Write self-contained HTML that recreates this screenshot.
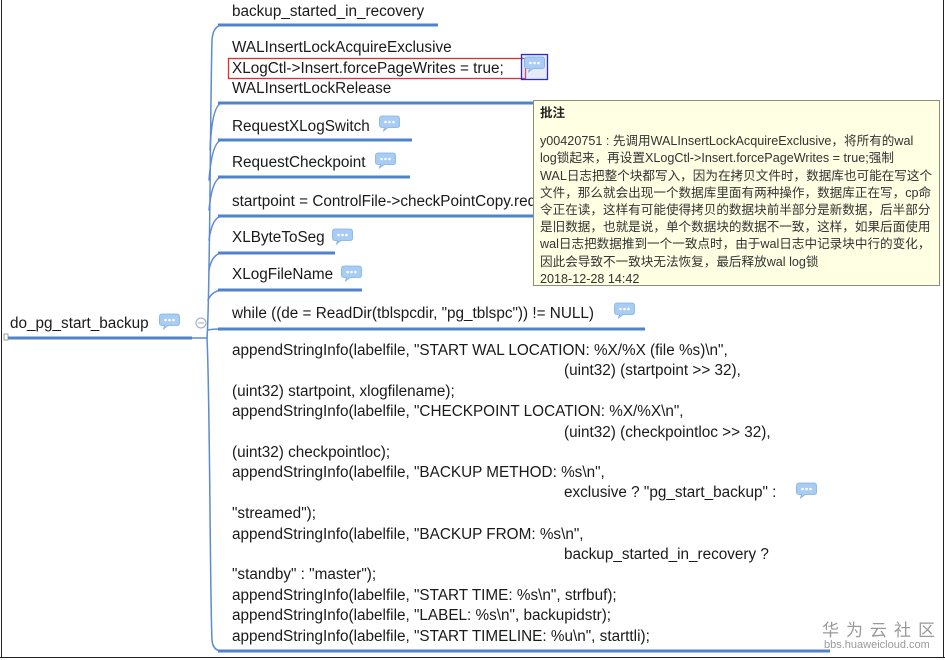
<!DOCTYPE html>
<html><head><meta charset="utf-8"><style>
*{margin:0;padding:0;box-sizing:border-box}
body{width:945px;height:660px;background:#fff;position:relative;overflow:hidden;font-family:"Liberation Sans","Noto Sans CJK SC",sans-serif;color:#1a1a1a}
.t{position:absolute;font-size:15.3px;white-space:pre;line-height:18px}
.ic{position:absolute;width:21px;height:17px}
.tip{position:absolute;left:533px;top:100px;width:407px;height:186px;background:#ffffe3;border:1px solid #8c8c7a;font-size:12.6px;color:#333;padding:4px 0 0 6px;line-height:17.2px;white-space:nowrap;overflow:hidden}
</style></head><body>
<div style="position:absolute;left:1px;top:0;width:1px;height:658px;background:#222"></div>
<div style="position:absolute;left:943px;top:0;width:1px;height:658px;background:#222"></div>
<div style="position:absolute;left:0;top:657px;width:945px;height:1px;background:#222"></div>

<svg width="945" height="660" style="position:absolute;left:0;top:0">
<g fill="none" stroke="#5b8bd0" stroke-linecap="round">
<path d="M192 338 H207" stroke-width="1.5"/>
<path d="M207 338 C210 300 210 120 212 40 Q213 26 222 25" stroke-width="1.5"/>
<path d="M207 338 C210 400 210 600 212 640 Q213 651 222 651" stroke-width="1.5"/>
<path d="M210 150 Q212 104 222 103" stroke-width="1.5"/>
<path d="M209 180 Q212 141 222 140" stroke-width="1.5"/>
<path d="M209 210 Q212 178 222 177" stroke-width="1.5"/>
<path d="M209 240 Q212 217 222 216" stroke-width="1.5"/>
<path d="M209 270 Q212 254 222 253" stroke-width="1.5"/>
<path d="M208 300 Q212 291 222 290" stroke-width="1.5"/>
<path d="M208 330 Q212 329 222 329" stroke-width="1.5"/>
</g>
<g stroke="#4f83cc" stroke-width="3">
<path d="M5 338 H192"/>
<path d="M218 25 H438"/>
<path d="M218 103 H535"/>
<path d="M218 140 H412"/>
<path d="M218 177 H410"/>
<path d="M218 216 H535"/>
<path d="M218 253 H335"/>
<path d="M218 290 H362"/>
<path d="M218 329 H645"/>
<path d="M218 651 H830"/>
</g>
<circle cx="201" cy="323" r="5" fill="#fff" stroke="#9aa8bd" stroke-width="1"/>
<path d="M198 323 H204" stroke="#9aa8bd"/>
<rect x="4" y="334" width="4" height="6" fill="#fff" stroke="#888" stroke-width=".8"/>
<rect x="228.5" y="58.5" width="297" height="20" fill="none" stroke="#e03030" stroke-width="1.3"/>
<rect x="521.5" y="54.5" width="26" height="25" fill="rgba(150,170,230,0.25)" stroke="#2a2ad0" stroke-width="1.3"/>
</svg>

<svg width="0" height="0" style="position:absolute"><defs>
<g id="b"><path d="M3 1 H18 Q20.5 1 20.5 4 V10 Q20.5 12.5 18 12.5 H9 L4.5 16 L5.5 12.5 H3 Q0.5 12.5 0.5 10 V4 Q0.5 1 3 1Z" fill="#a9cdf2" stroke="#7fb0e6" stroke-width=".8"/><circle cx="6.5" cy="7" r="1.3" fill="#fff"/><circle cx="10.5" cy="7" r="1.3" fill="#fff"/><circle cx="14.5" cy="7" r="1.3" fill="#fff"/></g>
</defs></svg>

<div class="t" style="left:232px;top:3px">backup_started_in_recovery</div>
<div class="t" style="left:232px;top:39px">WALInsertLockAcquireExclusive</div>
<div class="t" style="left:232px;top:60px">XLogCtl-&gt;Insert.forcePageWrites = true;</div>
<div class="t" style="left:232px;top:80px">WALInsertLockRelease</div>
<div class="t" style="left:232px;top:118px">RequestXLogSwitch</div>
<div class="t" style="left:232px;top:154px">RequestCheckpoint</div>
<div class="t" style="left:232px;top:193px">startpoint = ControlFile-&gt;checkPointCopy.redo;</div>
<div class="t" style="left:232px;top:229px">XLByteToSeg</div>
<div class="t" style="left:232px;top:266px">XLogFileName</div>
<div class="t" style="left:232px;top:305px">while ((de = ReadDir(tblspcdir, "pg_tblspc")) != NULL)</div>
<div class="t" style="left:10px;top:315px">do_pg_start_backup</div>

<div class="t" style="left:232px;top:342px">appendStringInfo(labelfile, "START WAL LOCATION: %X/%X (file %s)\n",</div>
<div class="t" style="left:564px;top:362px">(uint32) (startpoint &gt;&gt; 32),</div>
<div class="t" style="left:232px;top:383px">(uint32) startpoint, xlogfilename);</div>
<div class="t" style="left:232px;top:403px">appendStringInfo(labelfile, "CHECKPOINT LOCATION: %X/%X\n",</div>
<div class="t" style="left:564px;top:424px">(uint32) (checkpointloc &gt;&gt; 32),</div>
<div class="t" style="left:232px;top:444px">(uint32) checkpointloc);</div>
<div class="t" style="left:232px;top:464px">appendStringInfo(labelfile, "BACKUP METHOD: %s\n",</div>
<div class="t" style="left:564px;top:484px">exclusive ? "pg_start_backup" :</div>
<div class="t" style="left:232px;top:505px">"streamed");</div>
<div class="t" style="left:232px;top:526px">appendStringInfo(labelfile, "BACKUP FROM: %s\n",</div>
<div class="t" style="left:564px;top:546px">backup_started_in_recovery ?</div>
<div class="t" style="left:232px;top:566px">"standby" : "master");</div>
<div class="t" style="left:232px;top:587px">appendStringInfo(labelfile, "START TIME: %s\n", strfbuf);</div>
<div class="t" style="left:232px;top:607px">appendStringInfo(labelfile, "LABEL: %s\n", backupidstr);</div>
<div class="t" style="left:232px;top:628px">appendStringInfo(labelfile, "START TIMELINE: %u\n", starttli);</div>

<svg class="ic" style="left:524px;top:56px"><use href="#b"/></svg>
<svg class="ic" style="left:379px;top:115px"><use href="#b"/></svg>
<svg class="ic" style="left:375px;top:152px"><use href="#b"/></svg>
<svg class="ic" style="left:332px;top:228px"><use href="#b"/></svg>
<svg class="ic" style="left:341px;top:265px"><use href="#b"/></svg>
<svg class="ic" style="left:614px;top:302px"><use href="#b"/></svg>
<svg class="ic" style="left:159px;top:313px"><use href="#b"/></svg>
<svg class="ic" style="left:796px;top:482px"><use href="#b"/></svg>

<div class="tip"><div style="font-weight:bold;font-size:12.5px;color:#222">批注</div><div style="height:11px"></div>y00420751 : 先调用WALInsertLockAcquireExclusive，将所有的wal<br>log锁起来，再设置XLogCtl-&gt;Insert.forcePageWrites = true;强制<br>WAL日志把整个块都写入，因为在拷贝文件时，数据库也可能在写这个<br>文件，那么就会出现一个数据库里面有两种操作，数据库正在写，cp命<br>令正在读，这样有可能使得拷贝的数据块前半部分是新数据，后半部分<br>是旧数据，也就是说，单个数据块的数据不一致，这样，如果后面使用<br>wal日志把数据推到一个一致点时，由于wal日志中记录块中行的变化，<br>因此会导致不一致块无法恢复，最后释放wal log锁<br>2018-12-28 14:42</div>

<div style="position:absolute;left:822px;top:619px;font-size:17px;color:#9a9a9a;letter-spacing:7px;font-family:'Noto Sans CJK SC',sans-serif;line-height:20px;white-space:nowrap">华为云社区</div>
<div style="position:absolute;left:824px;top:639px;font-size:11px;color:#9a9a9a;line-height:12px;white-space:nowrap">bbs.huaweicloud.com</div>
</body></html>
